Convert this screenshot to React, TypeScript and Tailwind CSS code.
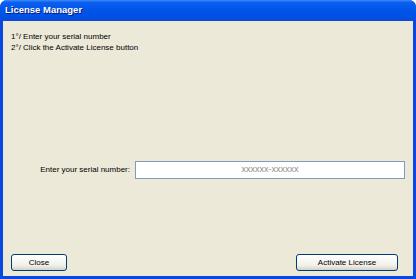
export default function App() {
  return (
    <div className="flex h-[279px] w-[416px] flex-col overflow-hidden rounded-t-[7px] bg-[#0848e0]">
      <div className="flex h-[21px] shrink-0 items-center bg-[linear-gradient(to_bottom,#3d8cf5_0%,#0a5ef0_12%,#0054e8_50%,#0050e6_85%,#0b4ccf_100%)] pl-[5px]">
        <span className="font-['Liberation_Sans',sans-serif] text-[9.5px] font-bold text-white [text-shadow:1px_1px_0_#0a1a7a]">
          License Manager
        </span>
      </div>
      <div className="mx-[3px] mb-[3px] flex flex-1 flex-col bg-[#ece9d8] font-['Liberation_Sans',sans-serif] text-[8px] text-black">
        <div className="pl-[8px] pt-[10px] leading-[11px]">
          <div>1°/ Enter your serial number</div>
          <div>2°/ Click the Activate License button</div>
        </div>
        <div className="mt-[108px] flex items-center">
          <span className="w-[127px] whitespace-nowrap text-right">Enter your serial number:</span>
          <div className="ml-[5px] flex h-[18px] w-[270px] items-center justify-center border border-[#7f9db9] bg-white">
            <span className="text-[9px] text-[#8c8c8c]">xxxxxx-xxxxxx</span>
          </div>
        </div>
        <div className="mt-auto mb-[5px] flex items-center justify-between px-[8px]">
          <button className="flex h-[17px] w-[56px] items-center justify-center rounded-[3px] border border-[#003c74] bg-[linear-gradient(to_bottom,#ffffff,#f0f0ea_70%,#d6d0c5)] text-[8px] text-black">
            Close
          </button>
          <button className="mr-[7px] flex h-[17px] w-[102px] items-center justify-center rounded-[3px] border border-[#003c74] bg-[linear-gradient(to_bottom,#ffffff,#f0f0ea_70%,#d6d0c5)] text-[8px] text-black">
            Activate License
          </button>
        </div>
      </div>
    </div>
  )
}
